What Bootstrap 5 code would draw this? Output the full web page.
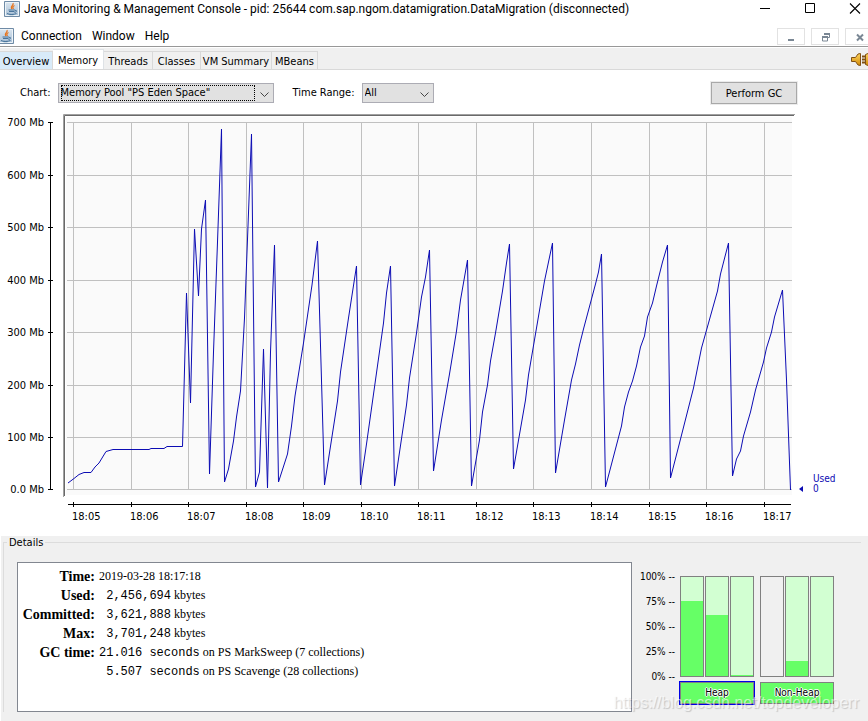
<!DOCTYPE html>
<html lang="en">
<head>
<meta charset="utf-8">
<meta name="viewport" content="width=device-width, initial-scale=1">
<title>Java Monitoring &amp; Management Console</title>
<link href="https://cdn.jsdelivr.net/npm/bootstrap@5.3.0/dist/css/bootstrap.min.css" rel="stylesheet">
<style>
:root{--ui:"DejaVu Sans Condensed","DejaVu Sans",sans-serif;--win:Roboto,"Open Sans",sans-serif;--edge:#dcdcdc;--face:#f0f0f0}
body{font:11px/14px var(--ui);color:#000;background:#fff;overflow-x:hidden}
button,select{font:inherit;color:inherit}
svg{display:block;flex:none}
.title-bar{height:20px;padding:0 7px 2px 4px;font:12px/16px var(--win);gap:4px}
.win-btn{border:0;background:none;padding:0;width:12px;height:16px}
.win-set{gap:33px}
.menu-bar{height:27px;padding-top:6px;font:12px/18px var(--win);border-bottom:1px solid #989898}
.menu-bar a{color:#000;text-decoration:none}
.menu-list{gap:10px;padding-left:7px}
.mdi-set{gap:6px;margin-right:-5px}
.mdi-btn{width:28px;height:17px;border:1px solid #e2e2e2;background:#fff;padding:0}
.tab-strip{height:22px;margin-top:1px;background:var(--face);border-bottom:1px solid #d9d9d9;overflow:hidden}
.tab-strip .nav-link{border:1px solid #d9d9d9;border-left:0;border-bottom:0;border-radius:0;color:#000;padding:2px 0 0;height:18px;margin:3px 0 0;background:var(--face);white-space:nowrap;line-height:14px}
.tab-strip .nav-tabs{border:0;flex-wrap:nowrap}
.tab-strip .nav-link.hover-tab{background:#d9ebf9}
.tab-strip .nav-link.active{background:#fff;height:21px;margin-top:1px;padding-top:2px;color:#000}
.w-1{width:53px}.w-2{width:51px}.w-3{width:49px}.w-4{width:48px}.w-5{width:71px}.w-6{width:46px}
.plug{margin:3px -3px 0 auto}
.controls{padding:12px 72px 0 20px}
.combo{position:relative;margin-left:7px}
.combo select{appearance:none;border:1px solid #acacb4;border-radius:0;background:#e1e1e1;height:20px;padding:1px 20px 1px 2px;width:100%;outline:0;display:block}
.combo svg{position:absolute;right:5px;top:9px;pointer-events:none}
.combo .focus-mark{position:absolute;left:3px;top:2px;bottom:2px;right:19px;border:1px dotted #000;pointer-events:none}
.pool{width:216px}.range{width:72px}
.range-label{margin-left:19px}
.gc-btn{width:86px;height:22px;border:1px solid #a8a8a8;outline:1px solid #ececec;background:#e1e1e1;padding:1px 0 0;margin-right:-1px}
.chart svg{width:100%;height:auto}
.chart text{font-family:var(--ui);font-size:11px}
.details{background:var(--face);padding:0 7px 8px 2px;flex:1;margin-left:1px}
.group{border-top:1px solid var(--edge);border-left:1px solid var(--edge);margin-top:6px;padding:0 0 0 13px}
.group-label{margin:-7px 0 8px -10px;background:var(--face);padding:0 2px;width:max-content}
.info{border:1px solid #828790;background:#fff;height:150px;padding:4px 0 0 2px;flex:1}
.info table{font:12px/19px "Liberation Serif",serif}
.info th{font-size:14px;text-align:right;padding:0 4px 0 0;width:79px;white-space:nowrap}
.info td{padding:0}
.info code{font:12px/14px "Liberation Mono",monospace;color:#000;white-space:pre}
.gauges{padding:14px 27px 0 0;font-size:10px}
.scale{height:115px;margin:-7px 5px 0 0;line-height:15px;text-align:right}
.bars{gap:1px;height:101px;margin-bottom:5px}
.meter{width:24px;border:1px solid #808080;background:#d2ffd2}
.meter span{display:block;width:100%;background:#66ff66}
.meter.idle{background:var(--face)}
.pool-btn{background:#66ff66;border:1px solid #808080;height:22px;padding:0;width:100%;display:block;text-shadow:0 0 1px #fff,1px 0 #fff,-1px 0 #fff,0 1px #fff,0 -1px #fff}
.pool-btn.chosen{outline:1px solid #0000e6}
.pools{gap:6px}
.watermark{position:absolute;right:9px;bottom:8px;font:16px/20px "Liberation Sans",sans-serif;color:rgba(255,255,255,.6);text-shadow:1px 1px 1px rgba(0,0,0,.18);pointer-events:none}
</style>
</head>
<body>
<svg width="0" height="0" class="position-absolute" aria-hidden="true"><defs>
<linearGradient id="jb" x2="0" y2="1"><stop stop-color="#dbe6f0"/><stop offset="1" stop-color="#a9c0d6"/></linearGradient>
<g id="java"><path d="M.5.5h15v15H.5z" fill="url(#jb)" stroke="#6f8ba6"/><path d="M1.500 1.500h13v13h-13z" fill="none" stroke="#eef4f8"/><path d="M9 2c1.500 2-3.500 3-1 6M10.500 4.500C8.500 5.500 8.500 6.500 9.500 8" fill="none" stroke="#e8741c" stroke-width="1.200"/><path d="M4.500 9h6.500M5 10.500h5.500M11 9.500c2-.8 2.300 1.500-.5 2M3 12.500c2 1.200 7 1.200 9.500 0M5.500 13.700h4" fill="none" stroke="#48749b"/></g>
</defs></svg>
<div class="position-relative d-flex flex-column min-vh-100">
<header class="title-bar d-flex align-items-center">
<svg width="16" height="16"><use href="#java"/></svg>
<span class="text-nowrap">Java Monitoring &amp; Management Console - pid: 25644 com.sap.ngom.datamigration.DataMigration (disconnected)</span>
<div class="win-set d-flex ms-auto">
<button class="win-btn" aria-label="Minimize"><svg width="12" height="16"><path d="M1 7.500h10" stroke="#000"/></svg></button>
<button class="win-btn" aria-label="Maximize"><svg width="12" height="16"><path d="M1.500 2.500h9v9h-9z" fill="none" stroke="#000"/></svg></button>
<button class="win-btn" aria-label="Close"><svg width="12" height="16"><path d="M1 2.500l10 10M11 2.500l-10 10" stroke="#000" stroke-width="1.100"/></svg></button>
</div>
</header>
<nav class="menu-bar d-flex align-items-center">
<svg width="14" height="16" viewBox="2 0 14 16"><use href="#java"/></svg>
<div class="menu-list d-flex"><a href="#">Connection</a><a href="#">Window</a><a href="#">Help</a></div>
<div class="mdi-set d-flex ms-auto">
<button class="mdi-btn" aria-label="Minimize window"><svg width="26" height="15"><path d="M10 11h6" stroke="#7a8794" stroke-width="2"/></svg></button>
<button class="mdi-btn" aria-label="Restore window"><svg width="26" height="15"><path d="M12.500 6V4.500h5v4H16M10 7.500h5M10.500 7v5h5V7" fill="none" stroke="#7a8794"/><path d="M12 5h6M10 8h6" stroke="#7a8794" stroke-width="2"/></svg></button>
<button class="mdi-btn" aria-label="Close window"><svg width="26" height="15"><path d="M11 5.500l6 6M17 5.500l-6 6" stroke="#7a8794" stroke-width="2"/></svg></button>
</div>
</nav>
<div class="tab-strip d-flex">
<div class="nav nav-tabs" role="tablist">
<button class="nav-link hover-tab w-1" role="tab">Overview</button>
<button class="nav-link active w-2" role="tab" aria-selected="true">Memory</button>
<button class="nav-link w-3" role="tab">Threads</button>
<button class="nav-link w-4" role="tab">Classes</button>
<button class="nav-link w-5" role="tab">VM Summary</button>
<button class="nav-link w-6" role="tab">MBeans</button>
</div>
<svg class="plug" width="20" height="18" viewBox="0 0 20 18"><defs><linearGradient id="gold" x2="0" y2="1"><stop stop-color="#ffd55e"/><stop offset="1" stop-color="#d18a08"/></linearGradient></defs><path d="M.5 6.500h4L7 3l2.500-.5v12L7 14l-2.500-3.500h-4z" fill="url(#gold)" stroke="#805014"/><path d="M11 5.500h3.500M11 11.500h3.500M11 8.500h3" stroke="#805014" stroke-width="1.800"/><path d="M14.500 3.500L17 2.500l4 3v7l-4 2-2.500-1z" fill="url(#gold)" stroke="#805014"/></svg>
</div>
<main class="d-flex flex-column flex-fill">
<div class="controls d-flex align-items-center">
<label for="pool">Chart:</label>
<div class="combo pool"><select id="pool"><option>Memory Pool "PS Eden Space"</option></select><span class="focus-mark"></span><svg width="9" height="6"><path d="M.5.500l4 4 4-4" fill="none" stroke="#444"/></svg></div>
<label for="range" class="range-label">Time Range:</label>
<div class="combo range"><select id="range"><option>All</option></select><svg width="9" height="6"><path d="M.5.500l4 4 4-4" fill="none" stroke="#444"/></svg></div>
<button class="gc-btn ms-auto">Perform GC</button>
</div>
<div class="chart">
<svg viewBox="0 104 868 432" role="img" aria-label="Memory usage over time">
<path d="M66 117h726v378H66z" fill="#fafafa"/>
<path d="M63.500 497V114.500H795" fill="none" stroke="#a0a0a0"/>
<path d="M64.500 496V115.500H794" fill="none" stroke="#696969"/>
<path d="M67 122.500h725M67 175.500h725M67 227.500h725M67 280.500h725M67 332.500h725M67 385.500h725M67 437.500h725M67 489.500h725M73.500 122v367M131.500 122v367M188.500 122v367M246.500 122v367M303.500 122v367M361.500 122v367M418.500 122v367M476.500 122v367M533.500 122v367M591.500 122v367M649.500 122v367M706.500 122v367M764.500 122v367" stroke="#c0c0c0" fill="none"/>
<path d="M50.500 122v368M48 122.500h5M48 175.500h5M48 227.500h5M48 280.500h5M48 332.500h5M48 385.500h5M48 437.500h5M48 489.500h5M68 504.500h723M73.500 502v5M131.500 502v5M188.500 502v5M246.500 502v5M303.500 502v5M361.500 502v5M418.500 502v5M476.500 502v5M533.500 502v5M591.500 502v5M649.500 502v5M706.500 502v5M764.500 502v5" stroke="#000" fill="none"/>
<g text-anchor="end"><text x="44" y="126">700 Mb</text><text x="44" y="179">600 Mb</text><text x="44" y="231">500 Mb</text><text x="44" y="284">400 Mb</text><text x="44" y="336">300 Mb</text><text x="44" y="389">200 Mb</text><text x="44" y="441">100 Mb</text><text x="44" y="493">0.0 Mb</text></g>
<g><text x="72" y="520">18:05</text><text x="130" y="520">18:06</text><text x="187" y="520">18:07</text><text x="245" y="520">18:08</text><text x="302" y="520">18:09</text><text x="360" y="520">18:10</text><text x="417" y="520">18:11</text><text x="475" y="520">18:12</text><text x="532" y="520">18:13</text><text x="590" y="520">18:14</text><text x="648" y="520">18:15</text><text x="705" y="520">18:16</text><text x="763" y="520">18:17</text></g>
<polyline fill="none" stroke="#0c0cb4" stroke-width="1" stroke-miterlimit="1" points="68,483 74,478.500 79,474.500 84,472.500 91,472.500 95,467 99,463 106,451.500 113,449.500 149,449.500 151,448.500 164,448.500 167,446.500 182.500,446.500 186.500,293 190.500,403 194.500,229 198.500,296 201.500,229 205.500,200 209.500,474 213.500,352 217.500,242 221.500,129 224.500,482 228.500,469 233.500,441 236.500,417 240.500,391 244.500,318 251.500,134 255.500,487 259.500,472 263.500,349 267.500,488 270.500,352 274.500,245 278.500,482 287.500,454 291.500,426 295,396 303.500,343 312,285 317.500,241 324.500,485 337.500,401 340.500,372 348.500,318 356.500,266 360.500,485 366.500,444 383.500,323 386.500,293 390.500,266 394.500,486 406.500,405 409.500,378 416.500,333 421.500,297 425.500,277 429.500,250 433.500,471 441.500,420 449.500,374 456.500,331 460.500,300 467.500,260 471.500,486 479.500,440 482.500,412 487.500,385 490.500,361 495.500,333 502.500,291 506.500,263 509.500,244 513.500,469 525.500,400 528.500,375 544.500,281 552.500,243 555.500,473 564.500,420 571.500,380 575.500,364 579.500,345 583.500,329 587.500,314 595.500,284 598.500,272 601.500,254 605.500,487 621.500,426 624.500,407 628.500,392 632.500,381 636.500,366 640.500,347 644.500,336 647.500,317 652.500,303 656.500,286 662.500,262 667.500,245 670.500,478 679.500,443 693.500,388 701.500,348 717.500,291 720.500,274 728.500,243 732.500,476 736.500,459 740.500,451 743.500,436 750.500,412 755.500,390 763.500,362 766.500,348 771.500,332 774.500,317 782.500,290 786.500,380 790.500,490"/>
<path d="M799 489l4-3v6z" fill="#0c0cb4"/>
<g fill="#0c0cb4"><text x="813" y="482" style="font-size:10px">Used</text><text x="813" y="492" style="font-size:10px">0</text></g>
</svg>
</div>
<section class="details">
<div class="group">
<div class="group-label">Details</div>
<div class="d-flex align-items-start pools-row">
<div class="info mt-1">
<table>
<tr><th>Time:</th><td>2019-03-28 18:17:18</td></tr>
<tr><th>Used:</th><td><code> 2,456,694</code> kbytes</td></tr>
<tr><th>Committed:</th><td><code> 3,621,888</code> kbytes</td></tr>
<tr><th>Max:</th><td><code> 3,701,248</code> kbytes</td></tr>
<tr><th>GC time:</th><td><code>21.016 seconds</code> on PS MarkSweep (7 collections)</td></tr>
<tr><th></th><td><code> 5.507 seconds</code> on PS Scavenge (28 collections)</td></tr>
</table>
</div>
<div class="gauges d-flex mt-1 ms-2">
<div class="scale d-flex flex-column justify-content-between"><span>100% --</span><span>75% --</span><span>50% --</span><span>25% --</span><span>0% --</span></div>
<div class="pools d-flex">
<div><div class="bars d-flex">
<div class="meter d-flex align-items-end"><span style="height:76%"></span></div>
<div class="meter d-flex align-items-end"><span style="height:62%"></span></div>
<div class="meter d-flex align-items-end"><span style="height:1%"></span></div>
</div><button class="pool-btn chosen">Heap</button></div>
<div><div class="bars d-flex">
<div class="meter idle"></div>
<div class="meter d-flex align-items-end"><span style="height:15%"></span></div>
<div class="meter"></div>
</div><button class="pool-btn">Non-Heap</button></div>
</div>
</div>
</div>
</div>
</section>
</main>
<div class="watermark">https://blog.csdn.net/topdeveloperr</div>
</div>
<script src="https://cdn.jsdelivr.net/npm/bootstrap@5.3.0/dist/js/bootstrap.bundle.min.js"></script>
</body>
</html>
